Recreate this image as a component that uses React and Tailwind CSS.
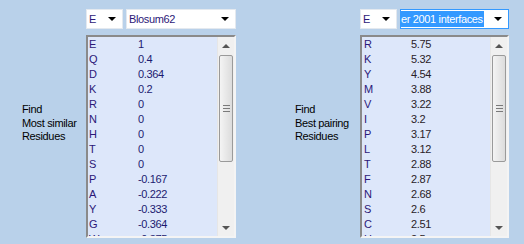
import React from "react";

const font = { fontFamily: '"Liberation Sans", Arial, sans-serif' };

const similar = [
  ["E", "1"], ["Q", "0.4"], ["D", "0.364"], ["K", "0.2"], ["R", "0"], ["N", "0"], ["H", "0"],
  ["T", "0"], ["S", "0"], ["P", "-0.167"], ["A", "-0.222"], ["Y", "-0.333"], ["G", "-0.364"], ["W", "-0.375"],
];

const pairing = [
  ["R", "5.75"], ["K", "5.32"], ["Y", "4.54"], ["M", "3.88"], ["V", "3.22"], ["I", "3.2"], ["P", "3.17"],
  ["L", "3.12"], ["T", "2.88"], ["F", "2.87"], ["N", "2.68"], ["S", "2.6"], ["C", "2.51"], ["H", "2.5"],
];

function DownTri() {
  return <div className="w-0 h-0 border-l-[4px] border-r-[4px] border-t-[4px] border-l-transparent border-r-transparent border-t-black" />;
}

function Combo({ width, border, children }) {
  return (
    <div className={`h-[20px] ${width} bg-white border ${border} flex items-center overflow-hidden`}>
      <div className="flex-1 overflow-hidden whitespace-nowrap pl-[2px]">{children}</div>
      <div className="mr-[6px] shrink-0">
        <DownTri />
      </div>
    </div>
  );
}

function ScrollBar() {
  return (
    <div className="w-[17px] h-full bg-[#f0f0f0] border-l border-[#e6e6e6] flex flex-col">
      <div className="h-[17px] flex items-center justify-center">
        <div className="w-0 h-0 border-l-[4px] border-r-[4px] border-b-[4px] border-l-transparent border-r-transparent border-b-[#555]" />
      </div>
      <div className="mt-[1px] mx-[1px] h-[107px] rounded-[2px] border border-[#9a9a9a] bg-gradient-to-r from-[#f4f4f4] to-[#dcdcdc] flex flex-col items-center justify-center gap-[2px]">
        <div className="w-[7px] h-[1px] bg-[#7a7a7a]" />
        <div className="w-[7px] h-[1px] bg-[#7a7a7a]" />
        <div className="w-[7px] h-[1px] bg-[#7a7a7a]" />
      </div>
      <div className="flex-1" />
      <div className="h-[17px] flex items-center justify-center">
        <div className="w-0 h-0 border-l-[4px] border-r-[4px] border-t-[4px] border-l-transparent border-r-transparent border-t-[#555]" />
      </div>
    </div>
  );
}

function ListBox({ rows, letterCol, numColor, pad }) {
  return (
    <div className="mt-[6px] h-[203px] border-2 border-t-[#8a8a8a] border-l-[#8a8a8a] border-r-[#f4f4f4] border-b-[#f4f4f4] bg-[#dde7fa] flex overflow-hidden">
      <div className={`flex-1 overflow-hidden ${pad}`}>
        {rows.map(([a, v]) => (
          <div key={a} className="flex h-[15px] items-center leading-[15px]">
            <span className={`${letterCol} text-[#2c1878]`}>{a}</span>
            <span className={numColor}>{v}</span>
          </div>
        ))}
      </div>
      <ScrollBar />
    </div>
  );
}

function Label({ lines, className }) {
  return (
    <div className={`pt-[103px] leading-[13.5px] text-black ${className}`}>
      {lines.map((l) => (
        <div key={l}>{l}</div>
      ))}
    </div>
  );
}

export default function App() {
  return (
    <div
      className="w-[524px] h-[244px] overflow-hidden bg-[#b9d1ea] flex text-[11px] tracking-[-0.35px]"
      style={font}
    >
      <Label lines={["Find", "Most similar", "Residues"]} className="ml-[22px] w-[64px]" />
      <div className="w-[150px] pt-[9px]">
        <div className="flex gap-[3px]">
          <Combo width="w-[37px]" border="border-[#e4e9ef]">
            <span className="text-[#2c1878]">E</span>
          </Combo>
          <Combo width="w-[110px]" border="border-[#e4e9ef]">
            <span className="text-[#2c1878]">Blosum62</span>
          </Combo>
        </div>
        <ListBox rows={similar} letterCol="w-[49px]" numColor="text-[#1c1a70]" pad="pl-[1px]" />
      </div>
      <Label lines={["Find", "Best pairing", "Residues"]} className="ml-[59px] w-[65px]" />
      <div className="w-[149px] pt-[9px]">
        <div className="flex gap-[3px]">
          <Combo width="w-[37px]" border="border-[#e4e9ef]">
            <span className="text-[#2c1878]">E</span>
          </Combo>
          <Combo width="w-[109px]" border="border-[#3399ff]">
            <span className="inline-block bg-[#3399ff] text-white px-[1px] leading-[16px] -ml-[3px]">er 2001 interfaces</span>
          </Combo>
        </div>
        <ListBox rows={pairing} letterCol="w-[47px]" numColor="text-[#2a2228]" pad="pl-[2px]" />
      </div>
    </div>
  );
}
